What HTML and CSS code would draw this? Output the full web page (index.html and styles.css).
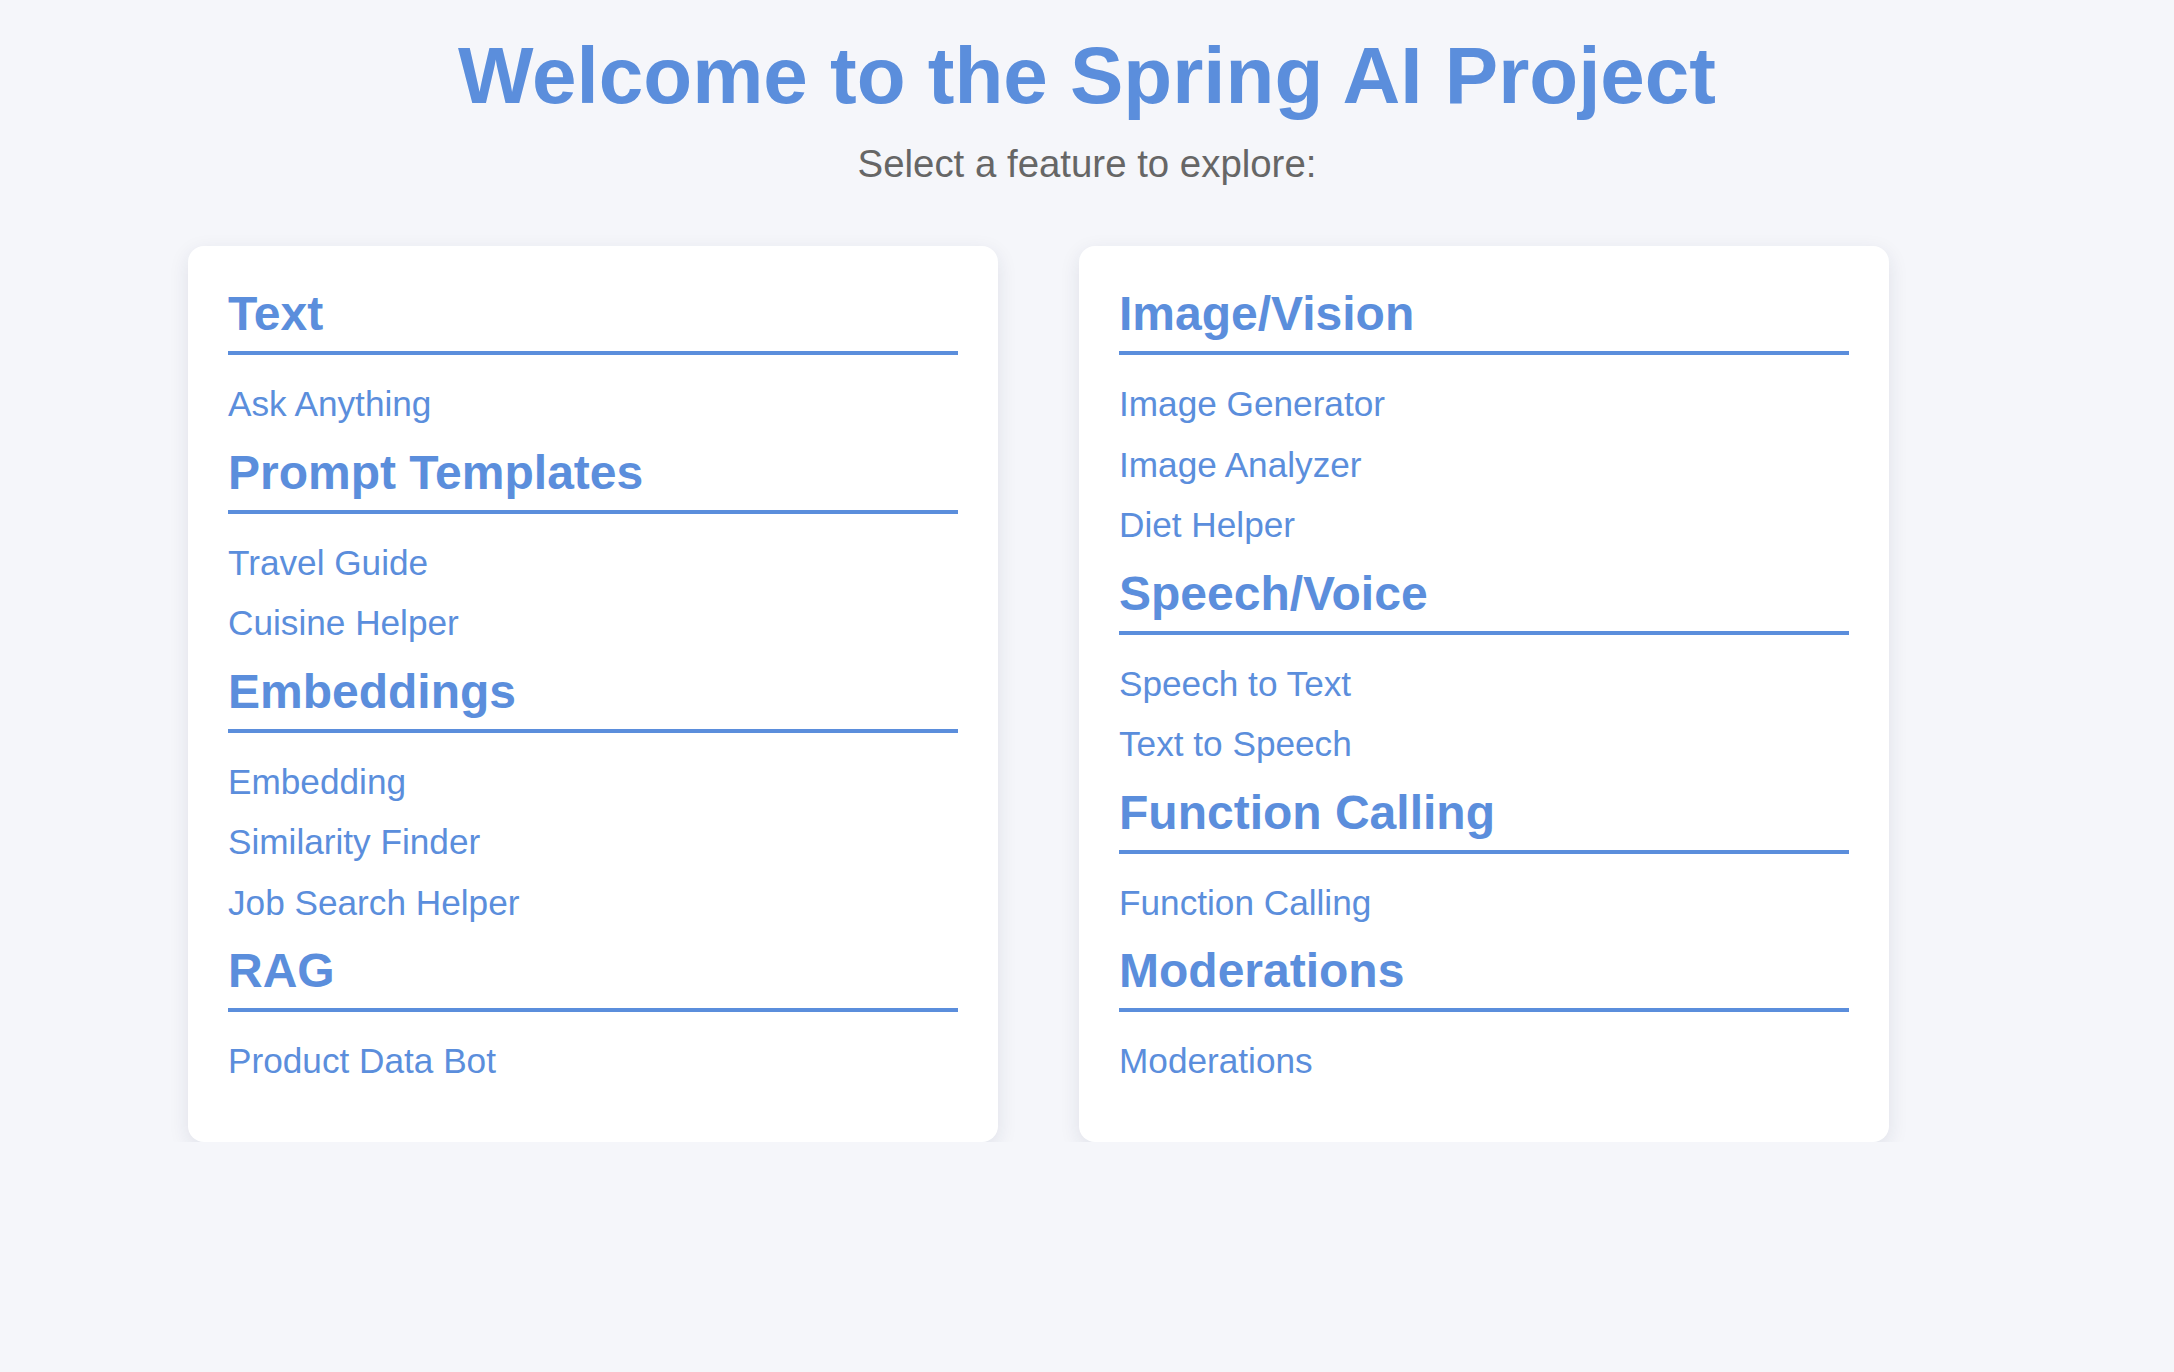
FILE: index.html
```html
<!DOCTYPE html>
<html lang="en">
<head>
<meta charset="utf-8">
<title>Spring AI Project</title>
<link rel="stylesheet" href="styles.css">
</head>
<body>
  <header class="hero">
    <h1 class="title">Welcome to the Spring AI Project</h1>
    <p class="subtitle">Select a feature to explore:</p>
  </header>
  <main class="cards">
    <section class="card">
      <h2 class="section-title">Text</h2>
      <ul class="links">
        <li><a href="#">Ask Anything</a></li>
      </ul>
      <h2 class="section-title">Prompt Templates</h2>
      <ul class="links">
        <li><a href="#">Travel Guide</a></li>
        <li><a href="#">Cuisine Helper</a></li>
      </ul>
      <h2 class="section-title">Embeddings</h2>
      <ul class="links">
        <li><a href="#">Embedding</a></li>
        <li><a href="#">Similarity Finder</a></li>
        <li><a href="#">Job Search Helper</a></li>
      </ul>
      <h2 class="section-title">RAG</h2>
      <ul class="links">
        <li><a href="#">Product Data Bot</a></li>
      </ul>
    </section>
    <section class="card">
      <h2 class="section-title">Image/Vision</h2>
      <ul class="links">
        <li><a href="#">Image Generator</a></li>
        <li><a href="#">Image Analyzer</a></li>
        <li><a href="#">Diet Helper</a></li>
      </ul>
      <h2 class="section-title">Speech/Voice</h2>
      <ul class="links">
        <li><a href="#">Speech to Text</a></li>
        <li><a href="#">Text to Speech</a></li>
      </ul>
      <h2 class="section-title">Function Calling</h2>
      <ul class="links">
        <li><a href="#">Function Calling</a></li>
      </ul>
      <h2 class="section-title">Moderations</h2>
      <ul class="links">
        <li><a href="#">Moderations</a></li>
      </ul>
    </section>
  </main>
</body>
</html>
```
FILE: styles.css
```css
* { box-sizing: border-box; }

html, body {
  margin: 0;
  padding: 0;
}

body {
  background: #f5f6fa;
  font-family: "Liberation Sans", Arial, Helvetica, sans-serif;
  color: #333;
  font-size: 32px;
}

.hero {
  text-align: center;
  padding-top: 30px;
}

.title {
  margin: 0 0 20px 0;
  font-size: 80px;
  font-weight: 700;
  color: #5b8edc;
  line-height: 92px;
}

.subtitle {
  margin: 0;
  font-size: 38.4px;
  color: #666666;
  line-height: 44px;
}

.cards {
  width: 1800px;
  margin: 60px auto 0 auto;
  padding-left: 1px;
  display: flex;
  flex-wrap: wrap;
  align-items: flex-start;
  gap: 81px;
}

.card {
  flex: 0 0 810px;
  background: #ffffff;
  border-radius: 16px;
  padding: 40px;
  box-shadow: 0 6px 20px rgba(30, 40, 80, 0.1);
}

.section-title {
  margin: 0 0 29px 0;
  padding-bottom: 10px;
  font-size: 48px;
  font-weight: 700;
  line-height: 55px;
  color: #5b8edc;
  border-bottom: 4px solid #5b8edc;
}

.links {
  list-style: none;
  margin: 0;
  padding: 0;
}

.links li {
  margin: 0 0 20px 0;
  font-size: 35.2px;
  line-height: 40.5px;
}

.links a {
  color: #5b8edc;
  text-decoration: none;
}
```
